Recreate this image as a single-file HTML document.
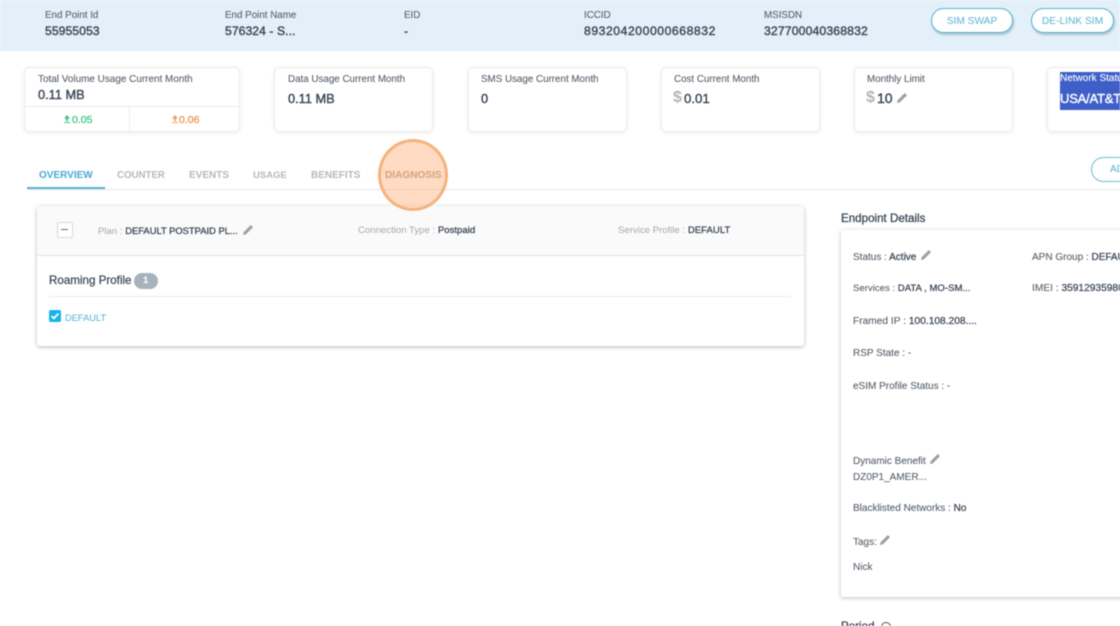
<!DOCTYPE html>
<html lang="en">
<head>
<meta charset="utf-8">
<title>Endpoint</title>
<style>
html,body{margin:0;padding:0;background:#fff}
body{width:1120px;height:626px;overflow:hidden;position:relative;font-family:"Liberation Sans",sans-serif;color:#59636e}
#w{position:absolute;left:0;top:0;width:1120px;height:626px;overflow:hidden;filter:blur(.45px)}
#w div,#w span.t,#w svg.p{position:absolute}
.t{white-space:nowrap;line-height:14px;font-size:9.8px;color:#59636e;-webkit-text-stroke:.1px #59636e}
.v{font-size:12.2px;color:#3c4858;-webkit-text-stroke:.4px #3c4858;letter-spacing:.05px}
.s{font-size:12.8px;color:#3c4858;-webkit-text-stroke:.4px #3c4858}
.card{background:#fff;border:1px solid #ececec;border-radius:5px;box-shadow:0 1px 4px rgba(0,0,0,.08);box-sizing:border-box;top:67px;height:65px;width:159px}
.tab{font-size:10px;font-weight:bold;color:#b5b8bb;top:168px;-webkit-text-stroke:0}
.b{color:#3c4858;-webkit-text-stroke:.25px #3c4858}
.r{font-size:10px}
.pill{border:1px solid #55b4d2;border-radius:13px;background:#fff;box-sizing:border-box;box-shadow:1px 2px 2px rgba(60,110,140,.35);color:#58b3d3;font-size:10.2px;text-align:center;line-height:25px}
.d{font-size:16px;font-weight:bold;color:#b4b4b4;-webkit-text-stroke:0}
</style>
</head>
<body>
<div id="w">
  <svg width="0" height="0" style="position:absolute"><defs><symbol id="pen" viewBox="0 0 12 12"><path d="M1 11l.6-2.8L8.3 1.5a.8.8 0 0 1 1.1 0l1.1 1.1a.8.8 0 0 1 0 1.1L3.8 10.4z" fill="#a0a0a0"/></symbol></defs></svg>

  <div style="left:0;top:0;width:1120px;height:51px;background:#e3f0f9"></div>
  <span class="t" style="left:45px;top:9px">End Point Id</span>
  <span class="t v" style="left:45px;top:24px">55955053</span>
  <span class="t" style="left:225px;top:9px">End Point Name</span>
  <span class="t v" style="left:225px;top:24px">576324 - S...</span>
  <span class="t" style="left:404px;top:9px">EID</span>
  <span class="t v" style="left:404px;top:24px">-</span>
  <span class="t" style="left:584px;top:9px">ICCID</span>
  <span class="t v" style="left:584px;top:24px;letter-spacing:.55px">893204200000668832</span>
  <span class="t" style="left:764px;top:9px">MSISDN</span>
  <span class="t v" style="left:764px;top:24px;letter-spacing:.15px">327700040368832</span>
  <div class="pill" style="left:931px;top:8px;width:82px;height:25px">SIM SWAP</div>
  <div class="pill" style="left:1031px;top:8px;width:83px;height:25px">DE-LINK SIM</div>

  <div class="card" style="left:24px;width:216px"></div>
  <div style="left:25px;top:106px;width:214px;height:1px;background:#ececec"></div>
  <div style="left:129px;top:107px;width:1px;height:24px;background:#ececec"></div>
  <span class="t" style="left:38px;top:73px;font-size:9.95px">Total Volume Usage Current Month</span>
  <span class="t s" style="left:38px;top:88px">0.11 MB</span>
  <svg class="p" style="left:63px;top:114px" width="8" height="10" viewBox="0 0 8 10"><path d="M4 1L1 4.5h2V7h2V4.5h2zM1 8h6v1H1z" fill="#3cc687"/></svg>
  <span class="t" style="left:72px;top:113px;font-size:10.5px;color:#3cc687;-webkit-text-stroke:.25px #3cc687">0.05</span>
  <svg class="p" style="left:171px;top:114px" width="8" height="10" viewBox="0 0 8 10"><path d="M4 1L1 4.5h2V7h2V4.5h2zM1 8h6v1H1z" fill="#f0a060"/></svg>
  <span class="t" style="left:179px;top:113px;font-size:10.5px;color:#ee914a;-webkit-text-stroke:.25px #ee914a">0.06</span>

  <div class="card" style="left:274px"></div>
  <span class="t" style="left:288px;top:73px">Data Usage Current Month</span>
  <span class="t s" style="left:288px;top:92px">0.11 MB</span>

  <div class="card" style="left:468px"></div>
  <span class="t" style="left:481px;top:73px">SMS Usage Current Month</span>
  <span class="t s" style="left:481px;top:92px">0</span>

  <div class="card" style="left:661px"></div>
  <span class="t" style="left:674px;top:73px">Cost Current Month</span>
  <span class="t d" style="left:673px;top:91px">$</span>
  <span class="t s" style="left:684px;top:92px;font-size:13.2px">0.01</span>

  <div class="card" style="left:854px"></div>
  <span class="t" style="left:867px;top:73px">Monthly Limit</span>
  <span class="t d" style="left:866px;top:91px">$</span>
  <span class="t s" style="left:877px;top:91px;font-size:14px">10</span>
  <svg class="p" style="left:896px;top:92px" width="12" height="12"><use href="#pen"/></svg>

  <div class="card" style="left:1047px;width:120px"></div>
  <div style="left:1060px;top:72px;width:60px;height:38px;background:#3f5fc8"></div>
  <span class="t" style="left:1060px;top:72px;color:#fff;-webkit-text-stroke:.1px #fff;font-size:10px">Network Status</span>
  <span class="t s" style="left:1060px;top:92px;color:#fff;-webkit-text-stroke:.4px #fff;font-size:13px;letter-spacing:-.2px">USA/AT&amp;T</span>

  <div style="left:27px;top:189px;width:1093px;height:1px;background:#e4e6e8"></div>
  <div style="left:27px;top:187px;width:78px;height:2px;background:#55b4d8"></div>
  <span class="t tab" style="left:39px;top:169px;color:#4aaad4">OVERVIEW</span>
  <span class="t tab" style="left:117px;top:169px;font-size:9.7px">COUNTER</span>
  <span class="t tab" style="left:189px;top:169px">EVENTS</span>
  <span class="t tab" style="left:253px;top:169px;font-size:9.5px">USAGE</span>
  <span class="t tab" style="left:311px;top:169px">BENEFITS</span>
  <span class="t tab" style="left:385px;top:169px;font-size:10.1px;color:#b39f90">DIAGNOSIS</span>
  <div style="left:1091px;top:157px;width:80px;height:25px;border:1px solid #6dbcd6;border-radius:13px;box-sizing:border-box"></div>
  <span class="t" style="left:1110px;top:163px;color:#58b3d3;font-size:10.2px;-webkit-text-stroke:0">ADD</span>

  <div style="left:37px;top:206px;width:767px;height:140px;background:#fff;border-radius:3px;box-shadow:0 1px 4px rgba(0,0,0,.28)"></div>
  <div style="left:37px;top:206px;width:767px;height:50px;background:#fafafa;border-bottom:1px solid #e2e2e2;box-sizing:border-box;border-radius:3px 3px 0 0"></div>
  <div style="left:57px;top:222px;width:16px;height:16px;background:#fff;border:1px solid #d8d8d8;box-sizing:border-box;border-radius:2px"></div>
  <div style="left:61px;top:229px;width:7px;height:1px;background:#666"></div>
  <span class="t" style="left:98px;top:224px;color:#a4a8ac;-webkit-text-stroke:0;font-size:9.6px">Plan : <span class="b" style="font-size:9.4px;color:#36404c">DEFAULT POSTPAID PL...</span></span>
  <svg class="p" style="left:242px;top:224px" width="12" height="12"><use href="#pen"/></svg>
  <span class="t" style="left:358px;top:224px;color:#a4a8ac;-webkit-text-stroke:0;font-size:9.6px">Connection Type : <span class="b" style="color:#36404c;font-size:9.6px">Postpaid</span></span>
  <span class="t" style="left:618px;top:224px;color:#a4a8ac;-webkit-text-stroke:0;font-size:9.6px">Service Profile : <span class="b" style="color:#36404c;font-size:9.6px">DEFAULT</span></span>

  <span class="t" style="left:49px;top:274px;font-size:11.6px;color:#3c4858;-webkit-text-stroke:.25px #3c4858">Roaming Profile</span>
  <div style="left:134px;top:273px;width:24px;height:16px;background:#a6b3bc;border-radius:8px"></div>
  <span class="t" style="left:143px;top:274px;color:#fff;font-size:9.6px;font-weight:bold;-webkit-text-stroke:0">1</span>
  <div style="left:49px;top:296px;width:743px;height:1px;background:#ececec"></div>
  <div style="left:49px;top:310px;width:12px;height:12px;background:#1ab3e8;border-radius:2px"></div>
  <svg class="p" style="left:49px;top:310px" width="12" height="12" viewBox="0 0 12 12"><path d="M2.5 6.2l2.4 2.2 4.5-4.8" fill="none" stroke="#fff" stroke-width="1.8"/></svg>
  <span class="t" style="left:65px;top:311px;color:#52b2d6;-webkit-text-stroke:0;font-size:9.3px">DEFAULT</span>

  <span class="t" style="left:841px;top:212px;font-size:11.6px;color:#3c4858;-webkit-text-stroke:.3px #3c4858">Endpoint Details</span>
  <div style="left:841px;top:230px;width:300px;height:367px;background:#fff;border-radius:2px;box-shadow:0 1px 4px rgba(0,0,0,.25)"></div>
  <span class="t r" style="left:853px;top:251px">Status : <span class="b">Active</span></span>
  <svg class="p" style="left:920px;top:249px" width="12" height="12"><use href="#pen"/></svg>
  <span class="t r" style="left:1032px;top:251px">APN Group : <span class="b">DEFAULT</span></span>
  <span class="t" style="left:853px;top:282px;font-size:9.6px">Services : <span class="b">DATA , MO-SM...</span></span>
  <span class="t" style="left:1032px;top:282px;font-size:10.2px">IMEI : <span class="b">359129359800</span></span>
  <span class="t" style="left:853px;top:315px;font-size:10.2px">Framed IP : <span class="b">100.108.208....</span></span>
  <span class="t r" style="left:853px;top:347px">RSP State : -</span>
  <span class="t r" style="left:853px;top:380px">eSIM Profile Status : -</span>
  <span class="t r" style="left:853px;top:455px">Dynamic Benefit</span>
  <svg class="p" style="left:929px;top:453px" width="12" height="12"><use href="#pen"/></svg>
  <span class="t r" style="left:853px;top:471px">DZ0P1_AMER...</span>
  <span class="t r" style="left:853px;top:502px">Blacklisted Networks : <span class="b">No</span></span>
  <span class="t r" style="left:853px;top:536px">Tags:</span>
  <svg class="p" style="left:879px;top:534px" width="12" height="12"><use href="#pen"/></svg>
  <span class="t r" style="left:853px;top:561px">Nick</span>
  <span class="t" style="left:841px;top:620px;font-size:11.6px;color:#3c4858;-webkit-text-stroke:.3px #3c4858">Period</span>
  <div style="left:881px;top:622px;width:10px;height:10px;border:1px solid #555;border-radius:50%;box-sizing:border-box"></div>

  <div style="left:378px;top:139px;width:70px;height:72px;border-radius:50%;background:rgba(253,170,110,.42);border:3px solid #f6b27c;box-sizing:border-box"></div>
</div>
</body>
</html>
